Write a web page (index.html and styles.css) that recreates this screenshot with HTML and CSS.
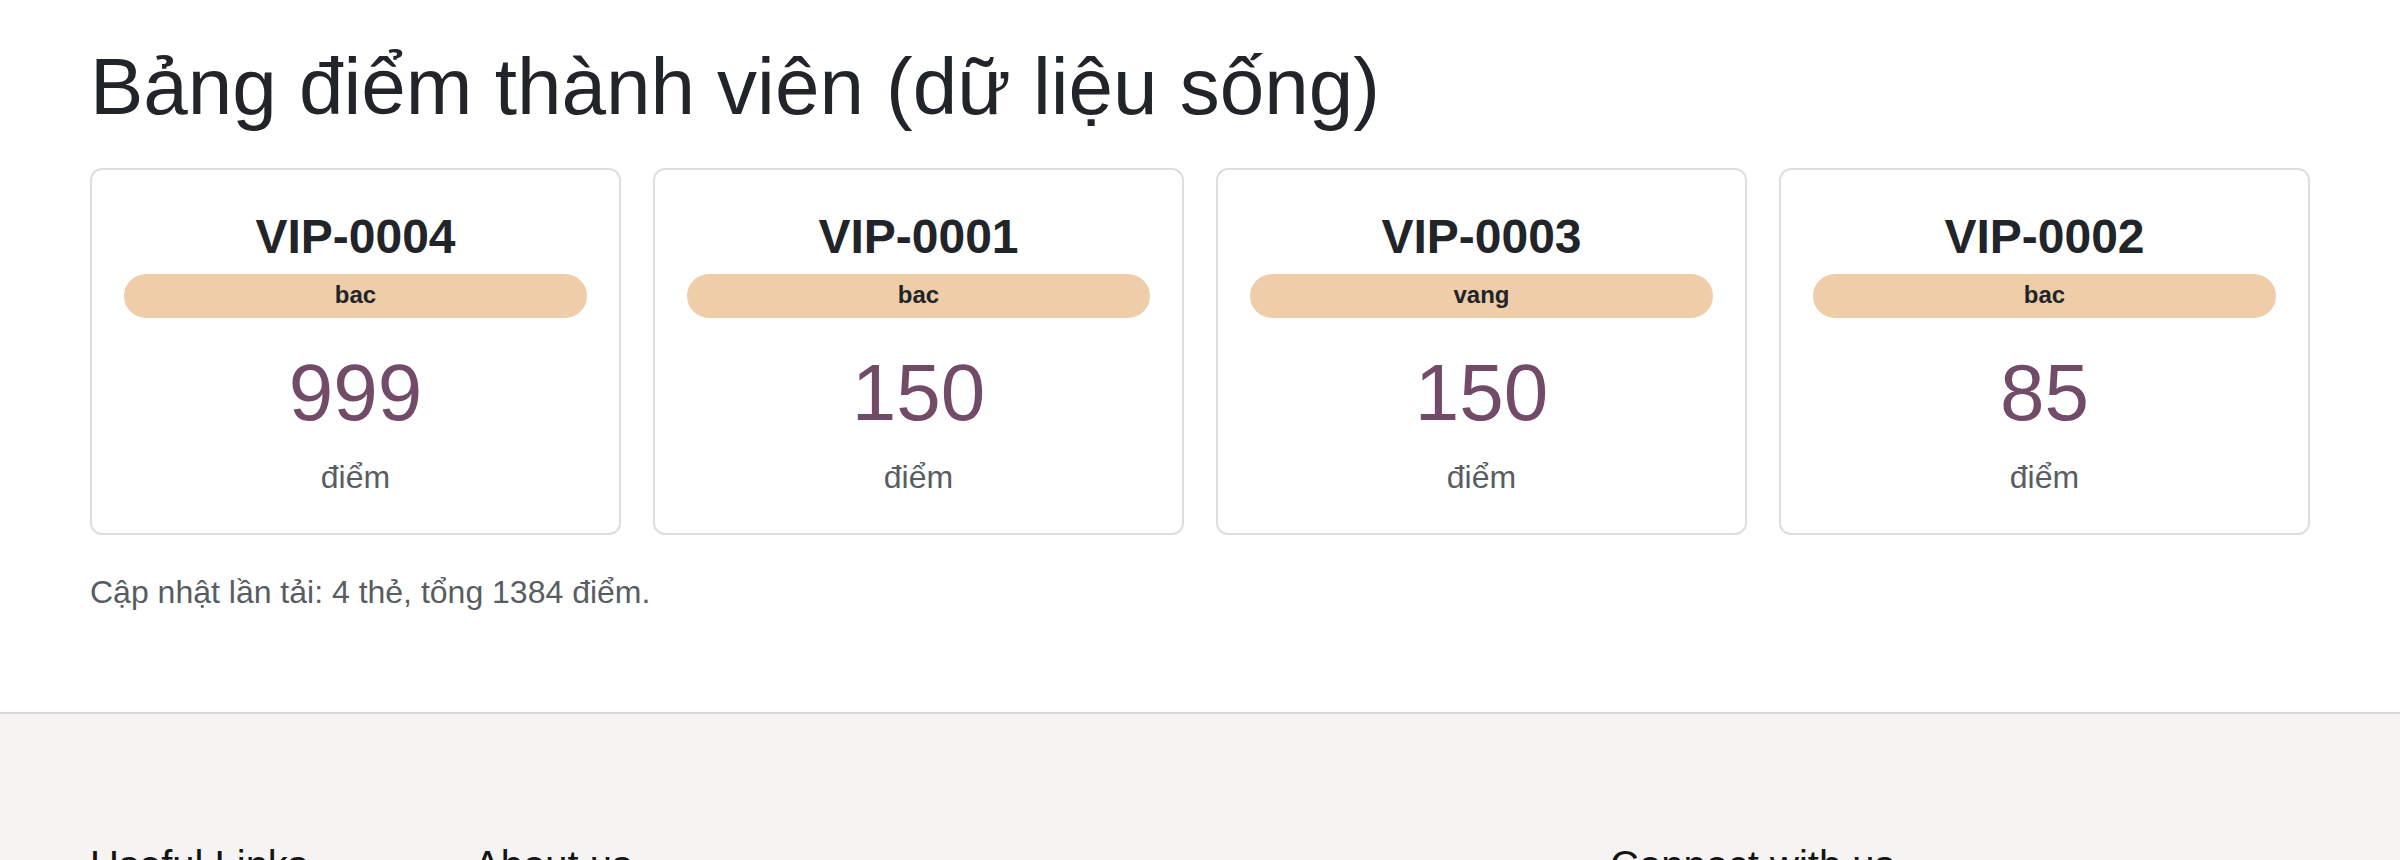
FILE: index.html
```html
<!DOCTYPE html>
<html lang="vi">
<head>
<meta charset="utf-8">
<title>Bảng điểm thành viên</title>
<link rel="stylesheet" href="styles.css">
</head>
<body>
<main class="page">
  <div class="container">
    <h1 class="page-title">Bảng điểm thành viên (dữ liệu sống)</h1>
    <div class="cards">
      <div class="card">
        <h4 class="card-code">VIP-0004</h4>
        <span class="badge">bac</span>
        <div class="points">999</div>
        <div class="points-label">điểm</div>
      </div>
      <div class="card">
        <h4 class="card-code">VIP-0001</h4>
        <span class="badge">bac</span>
        <div class="points">150</div>
        <div class="points-label">điểm</div>
      </div>
      <div class="card">
        <h4 class="card-code">VIP-0003</h4>
        <span class="badge">vang</span>
        <div class="points">150</div>
        <div class="points-label">điểm</div>
      </div>
      <div class="card">
        <h4 class="card-code">VIP-0002</h4>
        <span class="badge">bac</span>
        <div class="points">85</div>
        <div class="points-label">điểm</div>
      </div>
    </div>
    <p class="summary">Cập nhật lần tải: 4 thẻ, tổng 1384 điểm.</p>
  </div>
</main>
<footer class="footer">
  <div class="container footer-grid">
    <div class="footer-col"><h5 class="footer-heading">Useful Links</h5></div>
    <div class="footer-col"><h5 class="footer-heading">About us</h5></div>
    <div class="footer-col"><h5 class="footer-heading">Connect with us</h5></div>
  </div>
</footer>
</body>
</html>
```
FILE: styles.css
```css
html, body {
  margin: 0;
  padding: 0;
  background: #ffffff;
}

body {
  font-family: "Liberation Sans", Arial, Helvetica, sans-serif;
  color: #212529;
  font-size: 32px;
  line-height: 1.5;
}

.container {
  padding: 0 90px;
}

.page {
  padding-bottom: 96px;
}

.page-title {
  margin: 39px 0 33px;
  font-size: 80px;
  line-height: 96px;
  font-weight: 400;
  color: #212529;
}

.cards {
  display: grid;
  grid-template-columns: repeat(4, 1fr);
  gap: 32px;
}

.card {
  display: flex;
  flex-direction: column;
  align-items: stretch;
  text-align: center;
  border: 2px solid #dedede;
  border-radius: 12px;
  padding: 38px 32px 32px;
  background: #fff;
}

.card-code {
  margin: 0 0 8px;
  font-size: 48px;
  line-height: 57.6px;
  font-weight: 700;
  color: #212529;
}

.badge {
  display: block;
  height: 44px;
  line-height: 42px;
  border-radius: 22px;
  background: #f0cda9;
  color: #212529;
  font-size: 24px;
  font-weight: 700;
}

.points {
  margin-top: 27px;
  font-size: 80px;
  line-height: 96px;
  color: #714b67;
}

.points-label {
  margin-top: 12px;
  font-size: 32px;
  line-height: 48px;
  color: #585d63;
}

.summary {
  margin: 33px 0 0;
  font-size: 32px;
  line-height: 48px;
  color: #585d63;
}

.footer {
  border-top: 2px solid #d8d8d8;
  background: #f5f4f3;
  padding-top: 127px;
  min-height: 300px;
}

.footer-grid {
  display: grid;
  grid-template-columns: 384px 1136px 1fr;
}

.footer-heading {
  margin: 0;
  font-size: 40px;
  line-height: 48px;
  font-weight: 500;
  color: #141414;
}
```
